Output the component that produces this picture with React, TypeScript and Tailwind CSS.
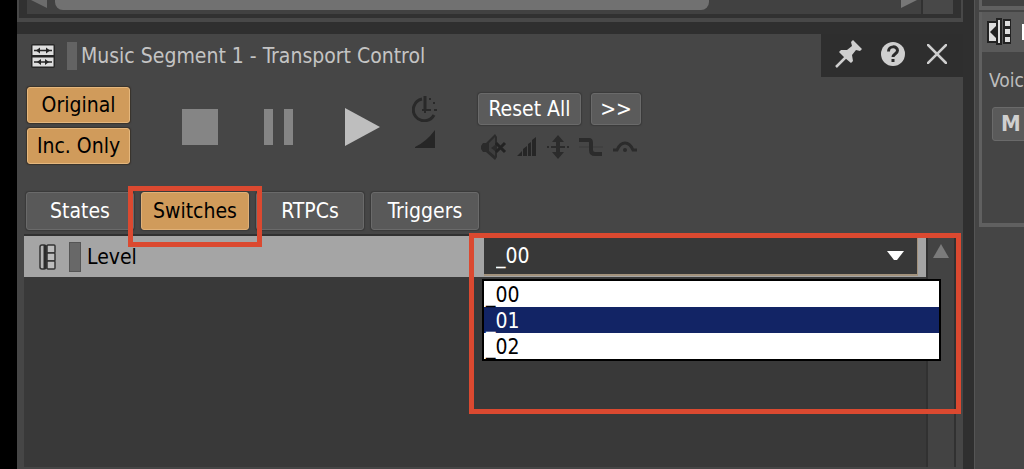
import { useState } from "react";
import type { ReactNode } from "react";
import clsx from "clsx";

const TABS = ["States", "Switches", "RTPCs", "Triggers"];
const LEVELS = ["_00", "_01", "_02"];

const SegmentIcon = () => (
  <svg viewBox="0 0 24 24" className="size-6 shrink-0">
    <rect width="24" height="24" rx="2" fill="#262626" />
    <rect x="1.500" y="1.500" width="21" height="9.500" fill="#dedede" />
    <rect x="1.500" y="13.500" width="21" height="9" fill="#dedede" />
    <path d="M3 6.500h18M3 18h18" stroke="#262626" strokeWidth="1.500" />
    <path d="M5 6.500l4-3v6zM19 6.500l-4-3v6zM6 18l4-3v6zM18 18l-4-3v6z" fill="#262626" />
  </svg>
);

const SwitchIcon = () => (
  <svg viewBox="0 0 17 26" className="h-[26px] w-[17px] shrink-0">
    <rect x="1" y="1" width="6" height="24" rx="2" fill="#b5b5b5" stroke="#333" strokeWidth="1.500" />
    <path d="M6 1v24" stroke="#2c2c2c" strokeWidth="3" />
    <g fill="#bdbdbd" stroke="#333" strokeWidth="1.500">
      <rect x="8" y="1" width="8" height="8" rx="1" />
      <rect x="8" y="9" width="8" height="8" rx="1" />
      <rect x="8" y="17" width="8" height="8" rx="1" />
    </g>
  </svg>
);

const PinIcon = () => (
  <svg viewBox="0 0 28 28" className="size-7">
    <path
      d="M4 12l2-2h6l5-4-1-4 2-2 9 9-2 2-4-1-4 5 1 6-2 2-6-5z"
      fill="#cfcfcf"
    />
    <path d="M1 27l11-11" stroke="#cfcfcf" strokeWidth="2.500" />
  </svg>
);

const HelpIcon = () => (
  <svg viewBox="0 0 24 24" className="size-6">
    <circle cx="12" cy="12" r="12" fill="#cfcfcf" />
    <path
      d="M7.500 9.500c0-6 9-6 9-1 0 3.500-4.500 3.500-4.500 6.500"
      fill="none"
      stroke="#2b2b2b"
      strokeWidth="3"
    />
    <rect x="10.500" y="17" width="3" height="3" fill="#2b2b2b" />
  </svg>
);

const CloseIcon = () => (
  <svg viewBox="0 0 20 20" className="size-5">
    <path d="M1 1l18 18M19 1L1 19" stroke="#cfcfcf" strokeWidth="2.500" strokeLinecap="square" />
  </svg>
);

const ClockIcon = () => (
  <svg viewBox="0 0 26 26" className="size-[26px]">
    <path d="M10 3A11 11 0 1 0 22 19" fill="none" stroke="#292929" strokeWidth="3" />
    <path d="M13 0v14" stroke="#292929" strokeWidth="3" />
    <path d="M10 14h9M13 12v5" stroke="#292929" strokeWidth="2" />
    <path d="M17 3h2M21 7h2M22 14h3" stroke="#292929" strokeWidth="2" />
  </svg>
);

const MuteIcon = () => (
  <svg viewBox="0 0 26 26" className="size-[26px]">
    <path d="M2 9h3l9-9 2 3v20l-2 3-9-8H2l-2-3v-3z" fill="#2b2b2b" />
    <path d="M8 9l6-6v8l-4 3 4 3v5l-6-5z" fill="#3d3d3d" />
    <path d="M15 9l9 9M24 9l-9 9" stroke="#232323" strokeWidth="3" />
  </svg>
);

const VolumeIcon = () => (
  <svg viewBox="0 0 20 20" className="size-5">
    <path d="M0 19l5-5v5zM6 12l4-3v10H6zM11 7l3-2v14h-3zM15 3l4-3v19h-4z" fill="#262626" />
  </svg>
);

const PitchIcon = () => (
  <svg viewBox="0 0 22 24" className="h-6 w-[22px]">
    <path d="M11 0l6 7h-4v10h4l-6 7-6-7h4V7H5z" fill="#2b2b2b" />
    <path d="M0 12h2M4 12h14M20 12h2" stroke="#2b2b2b" strokeWidth="2" />
  </svg>
);

const LowPassIcon = () => (
  <svg viewBox="0 0 24 20" className="h-5 w-6">
    <path d="M0 10h24" stroke="#3b3b3b" />
    <path d="M0 3h10q2 0 2 3v7q0 4 4 4h7" fill="none" stroke="#2b2b2b" strokeWidth="4" />
  </svg>
);

const HighPassIcon = () => (
  <svg viewBox="0 0 24 20" className="h-5 w-6">
    <path d="M0 13h4q3-7 8-7t8 7h4" fill="none" stroke="#2b2b2b" strokeWidth="3" />
    <circle cx="12" cy="13" r="2" fill="#2b2b2b" />
  </svg>
);

const VoiceIcon = () => (
  <svg viewBox="0 0 24 28" className="h-7 w-6 shrink-0">
    <path d="M1 4h9V1h4v25h-4v-2H1z" fill="#ddd" stroke="#222" strokeWidth="2" />
    <path d="M10 4v20" stroke="#222" strokeWidth="2" />
    <path d="M3 14l6-6v12z" fill="#222" />
    <path d="M16 1h8v25h-8z" fill="#222" />
    <path d="M18 3h5v5h-5zM18 11h5v5h-5zM18 19h5v5h-5z" fill="#ddd" />
  </svg>
);

const GreyButton = ({ children, className }: { children: ReactNode; className?: string }) => (
  <button
    type="button"
    className={clsx(
      "h-8 rounded-[3px] border border-[#6a6a6a] bg-[#5b5b5b] text-white shadow-[0_0_1px_1px_#3a3a3a]",
      className
    )}
  >
    {children}
  </button>
);

const OrangeButton = ({ children }: { children: ReactNode }) => (
  <button
    type="button"
    className="h-9 w-[103px] rounded-[3px] border border-[#e5b77d] bg-[#d09b5b] text-black shadow-[0_0_1px_1px_#38322b]"
  >
    {children}
  </button>
);

const UpperPanel = () => (
  <div className="h-[22px] border-x-2 border-b-4 border-[#484848] bg-[#313131] px-2 pb-1">
    <div className="flex h-[14px] items-start bg-[#414141]">
      <svg viewBox="0 0 16 8" className="ml-1 h-2 w-4 shrink-0">
        <path d="M0 0h16v8z" fill="#6c6c6c" />
      </svg>
      <div className="ml-2 mr-48 h-[10px] flex-1 rounded-b-lg bg-[#717171]" />
      <svg viewBox="0 0 16 8" className="mr-1 h-2 w-4 shrink-0">
        <path d="M0 0h16L0 8z" fill="#777" />
      </svg>
      <div className="h-full w-8 border-l-2 border-[#313131] bg-[#484848]" />
    </div>
  </div>
);

const TitleBar = () => (
  <header className="flex h-[43px]">
    <div className="flex flex-1 items-center pl-[7px]">
      <SegmentIcon />
      <div className="ml-3 h-7 w-[10px] bg-[#636363]" />
      <h1 className="ml-1 whitespace-nowrap text-[#c4c4c4]">
        Music Segment 1 - Transport Control
      </h1>
    </div>
    <div className="flex w-[142px] items-center gap-[18px] bg-[#2e2e2e] pb-1 pl-[14px]">
      <button type="button" aria-label="Pin">
        <PinIcon />
      </button>
      <button type="button" aria-label="Help">
        <HelpIcon />
      </button>
      <button type="button" aria-label="Close" className="ml-1">
        <CloseIcon />
      </button>
    </div>
  </header>
);

const Transport = () => (
  <div className="flex h-[115px] items-start pl-[3px] pt-[10px]">
    <div className="flex flex-col gap-[5px]">
      <OrangeButton>Original</OrangeButton>
      <OrangeButton>Inc. Only</OrangeButton>
    </div>
    <div className="ml-[52px] mt-[21px] flex items-center">
      <button type="button" aria-label="Stop" className="size-9 bg-[#858585]" />
      <button type="button" aria-label="Pause" className="ml-[46px] flex gap-[11px]">
        <span className="h-9 w-[9px] bg-[#858585]" />
        <span className="h-9 w-[9px] bg-[#858585]" />
      </button>
      <button type="button" aria-label="Play" className="ml-[52px]">
        <svg viewBox="0 0 35 38" className="h-[38px] w-[35px]">
          <path d="M0 0l35 19L0 38z" fill="#bebebe" />
        </svg>
      </button>
    </div>
    <div className="ml-8 mt-[9px] flex flex-col items-center gap-2">
      <ClockIcon />
      <svg viewBox="0 0 20 18" className="h-[18px] w-5">
        <path d="M0 18v-1Q11 12 20 0v18z" fill="#262626" />
      </svg>
    </div>
    <div className="ml-10 mt-[6px]">
      <div className="flex gap-[10px]">
        <GreyButton className="w-[103px]">Reset All</GreyButton>
        <GreyButton className="w-[50px]">&gt;&gt;</GreyButton>
      </div>
      <div className="mt-[9px] flex items-center gap-[10px] pl-[3px]">
        <MuteIcon />
        <VolumeIcon />
        <PitchIcon />
        <LowPassIcon />
        <HighPassIcon />
      </div>
    </div>
  </div>
);

const LevelSelect = ({ value, onChange }: { value: string; onChange: (v: string) => void }) => (
  <div className="relative mr-2 flex-1">
    <select
      aria-label="Level"
      value={value}
      onChange={(e) => onChange(e.target.value)}
      className="block h-10 w-full appearance-none border-b-2 border-r border-[#a3927c] bg-[#383838] pl-3 pt-[2px] text-white outline-none"
    >
      {LEVELS.map((l) => (
        <option key={l}>{l}</option>
      ))}
    </select>
    <svg viewBox="0 0 17 9" className="pointer-events-none absolute right-[14px] top-[15px] h-[9px] w-[17px]">
      <path d="M0 0h17L10 9H7z" fill="#fff" />
    </svg>

    {/* open list */}
    <ul role="listbox" aria-label="Levels" className="absolute -left-[2px] -right-[23px] top-[43px] border-2 border-black bg-white">
      {LEVELS.map((l) => (
        <li
          key={l}
          role="option"
          aria-selected={l === "_01"}
          onClick={() => onChange(l)}
          className={clsx(
            "h-[26px] pl-[2px] leading-7",
            l === "_01" ? "bg-[#122465] text-white" : "text-black"
          )}
        >
          {l}
        </li>
      ))}
    </ul>
    <div className="pointer-events-none absolute -left-[15px] -right-[43px] -top-[3px] h-[181px] border-5 border-[#db4930]" />
  </div>
);

const SidePanel = () => (
  <aside className="w-[50px] shrink-0 overflow-hidden border-l border-[#555] bg-[#454545] pl-1">
    <div className="h-[10px] border-b-4 border-l-[3px] border-[#606060] bg-[#414141]" />
    <div className="mt-[2px] h-[215px] border-b-4 border-l-[3px] border-[#606060]">
      <div className="flex h-10 items-center justify-between bg-[#5a5a5a] pl-[5px]">
        <VoiceIcon />
        <div className="h-4 w-[2px] bg-white" />
      </div>
      <div className="whitespace-nowrap pl-[7px] pt-[14px] text-[19px] leading-7 text-[#bdbdbd]">
        Voic
      </div>
      <button
        type="button"
        aria-label="Mute"
        className="ml-[10px] mt-[13px] h-[34px] w-12 rounded-[3px] border border-[#6a6a6a] bg-[#5a5a5a] pl-2 text-left text-[22px] font-bold leading-7 text-[#cfcfcf]"
      >
        M
      </button>
    </div>
  </aside>
);

export default function App() {
  const [tab, setTab] = useState("Switches");
  const [level, setLevel] = useState("_00");

  return (
    <div className="flex min-h-screen bg-[#2f2f2f] font-['DejaVu_Sans_Condensed','DejaVu_Sans',sans-serif] text-[21px] leading-7">
      <div className="w-[17px] shrink-0 bg-black" />

      <main className="mr-[11px] flex min-w-0 flex-1 flex-col">
        <UpperPanel />
        <section className="mt-3 flex flex-1 flex-col border-x-[7px] border-b-2 border-[#464646] bg-[#464646]">
          <div className="-mr-[7px]">
            <TitleBar />
            <Transport />
          </div>

          <nav className="flex h-11 gap-[7px] border-b-2 border-[#313131] pl-[2px]">
            {TABS.map((t) => (
              <div key={t} className="relative">
                <button
                  type="button"
                  onClick={() => setTab(t)}
                  className={clsx(
                    "h-[38px] w-[108px] rounded-[3px] border shadow-[0_0_1px_1px_#393939]",
                    t === tab
                      ? "border-[#e0b077] bg-[#d09b5b] text-black"
                      : "border-[#6a6a6a] bg-[#595959] text-white"
                  )}
                >
                  {t}
                </button>
                {t === "Switches" && (
                  <div className="pointer-events-none absolute -left-[13px] -right-[13px] -top-[6px] z-10 h-[61px] border-5 border-[#db4930]" />
                )}
              </div>
            ))}
          </nav>

          <div className="flex flex-1">
            <div className="flex-1 bg-[#393939]">
              <div className="flex h-[41px] bg-[#a5a5a5]">
                <div className="flex w-[51%] items-center pl-[15px] text-black">
                  <SwitchIcon />
                  <div className="ml-[13px] h-[30px] w-3 border border-[#555] bg-[#686868]" />
                  <span className="ml-[6px]">Level</span>
                </div>
                <LevelSelect value={level} onChange={setLevel} />
              </div>
            </div>
            <div className="flex w-[30px] justify-center border-x-2 border-[#313131] bg-[#434343] pt-2">
              <svg viewBox="0 0 16 14" className="h-[14px] w-4">
                <path d="M8 0l8 14H0z" fill="#7b7b7b" />
              </svg>
            </div>
          </div>
        </section>
      </main>

      <SidePanel />
    </div>
  );
}
